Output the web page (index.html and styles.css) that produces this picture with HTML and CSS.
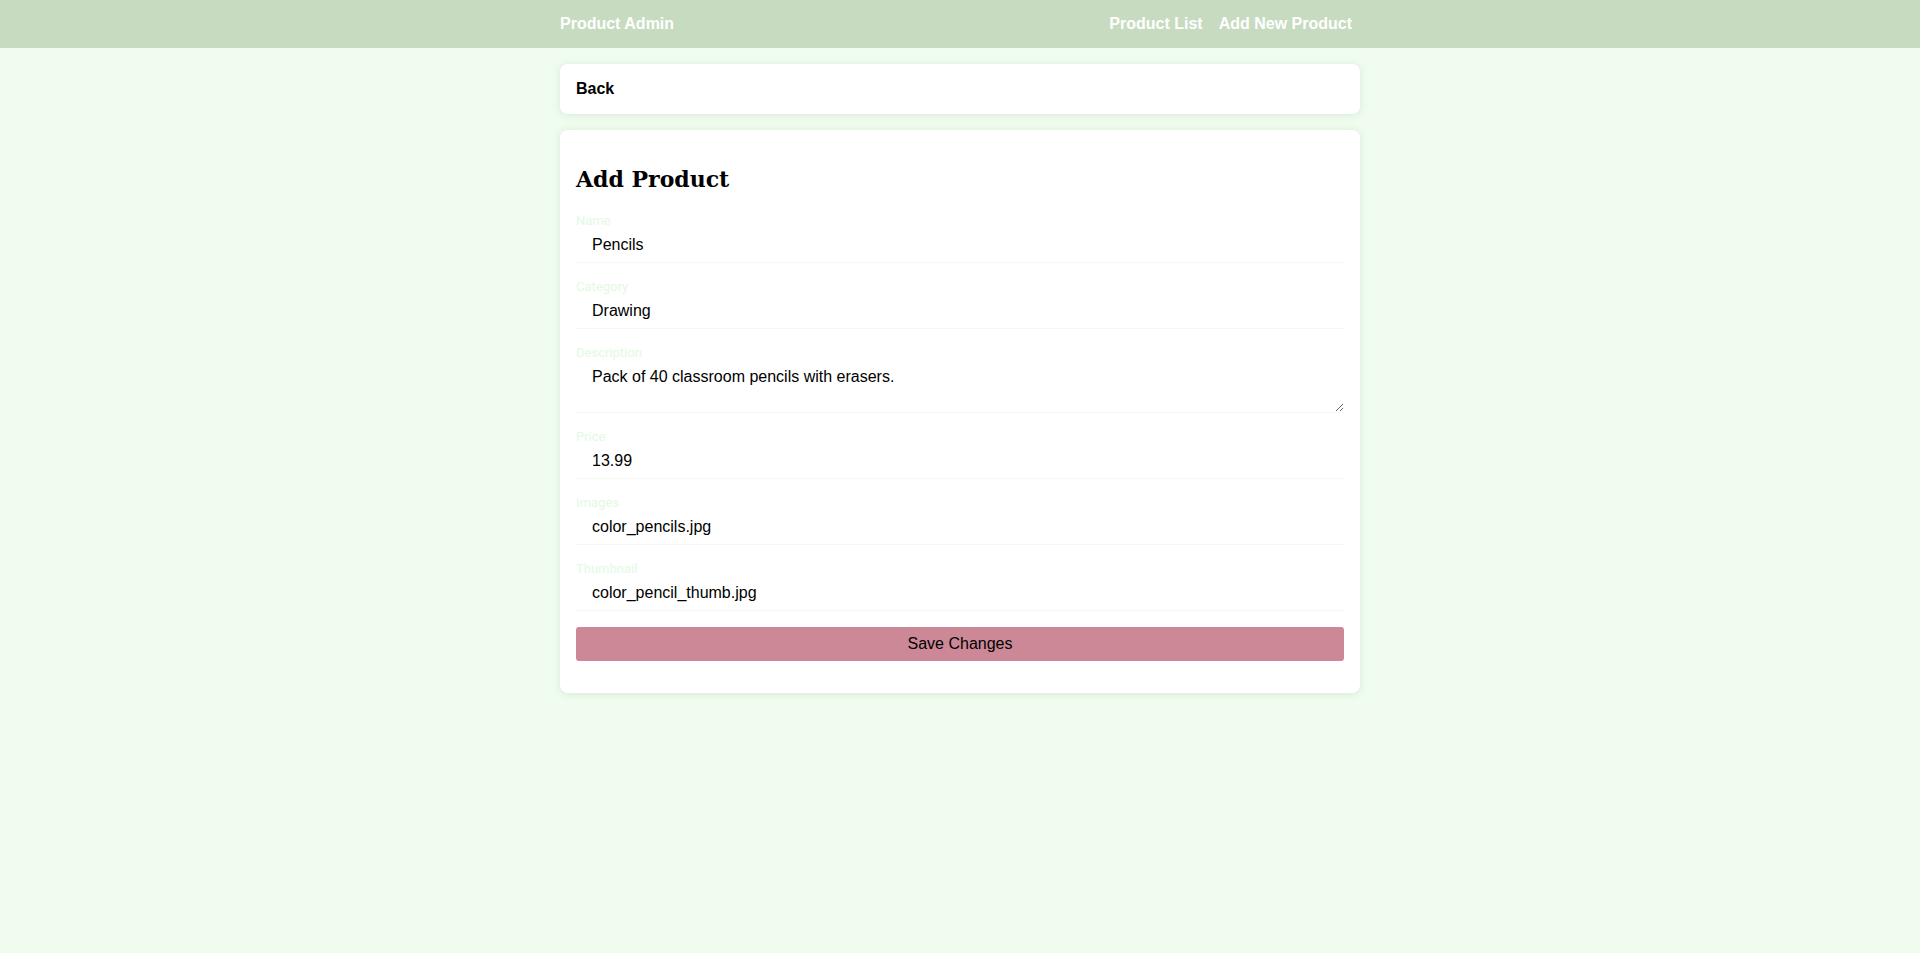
FILE: index.html
```html
<!DOCTYPE html>
<html lang="en">
<head>
<meta charset="utf-8">
<title>Product Admin</title>
<link rel="stylesheet" href="styles.css">
</head>
<body>
<header class="nav">
  <div class="nav-inner">
    <a class="brand" href="#">Product Admin</a>
    <nav class="nav-links">
      <a href="#">Product List</a>
      <a href="#">Add New Product</a>
    </nav>
  </div>
</header>
<main class="container">
  <div class="card back-card">
    <a class="back" href="#">Back</a>
  </div>
  <div class="card form-card">
    <h2 class="title">Add Product</h2>
    <form class="form">
      <div class="field">
        <label for="name">Name</label>
        <input id="name" type="text" value="Pencils">
      </div>
      <div class="field">
        <label for="category">Category</label>
        <input id="category" type="text" value="Drawing">
      </div>
      <div class="field">
        <label for="description">Description</label>
        <textarea id="description" rows="2">Pack of 40 classroom pencils with erasers.</textarea>
      </div>
      <div class="field">
        <label for="price">Price</label>
        <input id="price" type="text" value="13.99">
      </div>
      <div class="field">
        <label for="images">Images</label>
        <input id="images" type="text" value="color_pencils.jpg">
      </div>
      <div class="field">
        <label for="thumbnail">Thumbnail</label>
        <input id="thumbnail" type="text" value="color_pencil_thumb.jpg">
      </div>
      <button class="save" type="button">Save Changes</button>
    </form>
  </div>
</main>
</body>
</html>
```
FILE: styles.css
```css
* { box-sizing: border-box; }
html, body {
  margin: 0;
  padding: 0;
}
body {
  background: #effcee;
  font-family: "Liberation Sans", Arial, sans-serif;
  font-size: 16px;
  color: #000;
  min-height: 953px;
}
.nav {
  background: #c7dbc0;
  height: 48px;
}
.nav-inner {
  max-width: 800px;
  margin: 0 auto;
  height: 48px;
  display: flex;
  align-items: center;
  justify-content: space-between;
}
.brand {
  color: #fff;
  font-weight: bold;
  text-decoration: none;
}
.nav-links {
  display: flex;
}
.nav-links a {
  color: #fff;
  font-weight: bold;
  text-decoration: none;
  padding: 0 8px;
}
.container {
  max-width: 800px;
  margin: 16px auto 0;
  display: flex;
  flex-direction: column;
  gap: 16px;
}
.card {
  background: #fff;
  border-radius: 8px;
  box-shadow: 0 1px 8px rgba(120, 150, 120, 0.18);
  padding: 16px;
}
.back {
  display: block;
  color: #000;
  font-weight: bold;
  text-decoration: none;
  line-height: 18px;
}
.form-card {
  padding-bottom: 16px;
}
.title {
  font-family: "DejaVu Serif", Georgia, serif;
  font-size: 22px;
  font-weight: bold;
  margin: 20px 0 20px;
  line-height: 27px;
}
.form {
  display: flex;
  flex-direction: column;
}
.field {
  display: flex;
  flex-direction: column;
  margin-bottom: 16px;
}
.field label {
  font-family: Roboto, "Liberation Sans", sans-serif;
  font-size: 13px;
  line-height: 15px;
  color: #e2fae2;
}
.field input,
.field textarea {
  font-family: "Liberation Sans", Arial, sans-serif;
  font-size: 16px;
  line-height: 18px;
  color: #000;
  border: none;
  border-bottom: 1px solid #effcee;
  padding: 8px 16px;
  outline: none;
  background: #fff;
  width: 100%;
  margin: 0;
}
.field textarea {
  height: 53px;
  resize: vertical;
  display: block;
}
.save {
  font-family: "Liberation Sans", Arial, sans-serif;
  font-size: 16px;
  line-height: 18px;
  padding: 8px;
  border: none;
  border-radius: 3px;
  background: #cd8898;
  color: #000;
  margin-bottom: 16px;
  cursor: pointer;
}
```
